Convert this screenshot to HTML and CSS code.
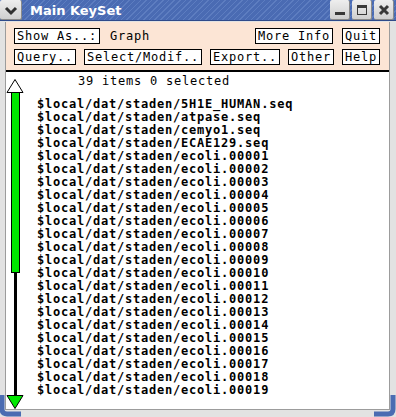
FILE: index.html
```html
<html>
  <head>
    <link rel="stylesheet" href="styles.css">
  </head>
  <body>
    <div class="window">
      <div class="titlebar">
        <div class="tbtn menu">
          <svg width="20" height="18" viewBox="0 0 20 18"><polyline points="5,7 10,12 15,7" fill="none" stroke="#303030" stroke-width="3"/></svg>
        </div>
        <div class="title">Main KeySet</div>
        <div class="tbtn">
          <svg width="18" height="18" viewBox="0 0 18 18"><rect x="4" y="11" width="10" height="3" fill="#383838"/></svg>
        </div>
        <div class="tbtn">
          <svg width="18" height="18" viewBox="0 0 18 18"><rect x="4.5" y="4.5" width="9" height="9" fill="none" stroke="#383838"/><rect x="4" y="4" width="10" height="3" fill="#383838"/></svg>
        </div>
        <div class="tbtn">
          <svg width="18" height="18" viewBox="0 0 18 18"><path d="M5 5 L13 13 M13 5 L5 13" stroke="#383838" stroke-width="3"/></svg>
        </div>
      </div>

      <div class="frame">
        <div class="client">
          <!-- button panel -->
          <div class="panel">
            <div class="row">
              <span class="btn">Show As..:</span>
              <span class="label">Graph</span>
              <span class="btn push">More Info</span>
              <span class="btn">Quit</span>
            </div>
            <div class="row spread">
              <span class="btn">Query..</span>
              <span class="btn">Select/Modif..</span>
              <span class="btn">Export..</span>
              <span class="btn">Other</span>
              <span class="btn">Help</span>
            </div>
          </div>

          <!-- key list -->
          <div class="listarea">
            <div class="scroll">
              <svg width="18" height="14" viewBox="0 0 18 14"><polygon points="9,0.5 17,13.5 1,13.5" fill="#fff" stroke="#000"/></svg>
              <div class="slider"></div>
              <div class="track"></div>
              <svg width="18" height="14" viewBox="0 0 18 14"><polygon points="1,0.5 17,0.5 9,13.5" fill="#00e800" stroke="#000"/></svg>
            </div>
            <div class="list">
              <div class="status">39 items 0 selected</div>
              <div class="items">
                <div>$local/dat/staden/5H1E_HUMAN.seq</div>
                <div>$local/dat/staden/atpase.seq</div>
                <div>$local/dat/staden/cemyo1.seq</div>
                <div>$local/dat/staden/ECAE129.seq</div>
                <div>$local/dat/staden/ecoli.00001</div>
                <div>$local/dat/staden/ecoli.00002</div>
                <div>$local/dat/staden/ecoli.00003</div>
                <div>$local/dat/staden/ecoli.00004</div>
                <div>$local/dat/staden/ecoli.00005</div>
                <div>$local/dat/staden/ecoli.00006</div>
                <div>$local/dat/staden/ecoli.00007</div>
                <div>$local/dat/staden/ecoli.00008</div>
                <div>$local/dat/staden/ecoli.00009</div>
                <div>$local/dat/staden/ecoli.00010</div>
                <div>$local/dat/staden/ecoli.00011</div>
                <div>$local/dat/staden/ecoli.00012</div>
                <div>$local/dat/staden/ecoli.00013</div>
                <div>$local/dat/staden/ecoli.00014</div>
                <div>$local/dat/staden/ecoli.00015</div>
                <div>$local/dat/staden/ecoli.00016</div>
                <div>$local/dat/staden/ecoli.00017</div>
                <div>$local/dat/staden/ecoli.00018</div>
                <div>$local/dat/staden/ecoli.00019</div>
              </div>
            </div>
          </div>
        </div>
      </div>

      <div class="bottom"></div>

      <!-- frame corners -->
      <svg class="corner left" width="22" height="22" viewBox="0 0 22 22"><path d="M2 0 V14 Q2 19 7 19 H21" fill="none" stroke="#4b6cb2" stroke-width="5"/></svg>
      <svg class="corner right" width="22" height="22" viewBox="0 0 22 22"><path d="M19 0 V14 Q19 19 14 19 H0" fill="none" stroke="#4b6cb2" stroke-width="5"/></svg>
    </div>
  </body>
</html>
```

FILE: styles.css
```css
body {
  margin: 0;
  overflow: hidden;
}

.window {
  position: relative;
  width: 396px;
  height: 417px;
  display: flex;
  flex-direction: column;
  background: #e2e2e2;
}

/* TITLE BAR ================================== */
.titlebar {
  height: 20px;
  display: flex;
  align-items: center;
  background: repeating-linear-gradient(135deg, #4a6bb3 0px, #4a6bb3 3px, #5d7dc0 3px, #5d7dc0 4px);
  border-bottom: 1px solid #2e4a8a;
}
.title {
  flex: 1;
  margin-left: 8px;
  color: #fff;
  font-family: "DejaVu Sans", sans-serif;
  font-weight: bold;
  font-size: 13px;
}
.tbtn {
  width: 19px;
  height: 19px;
  margin-right: 2px;
  display: flex;
  align-items: center;
  justify-content: center;
  background: linear-gradient(#eeeeee, #cfcfcf);
  border-right: 1px solid #8a8a8a;
  border-bottom: 1px solid #8a8a8a;
  border-radius: 2px;
}
.tbtn.menu {
  width: 21px;
  margin-right: 0;
}

/* FRAME ====================================== */
.frame {
  flex: 1;
  display: flex;
  padding: 1px 6px 0 5px;
  min-height: 0;
}
.client {
  flex: 1;
  display: flex;
  flex-direction: column;
  border-left: 1px solid #9c9c9c;
  border-right: 1px solid #9c9c9c;
  border-bottom: 1px solid #9c9c9c;
  background: #fff;
  font-family: "DejaVu Sans Mono", monospace;
  font-size: 12px;
  letter-spacing: 0.78px;
  color: #000;
}
.bottom {
  height: 7px;
}
.corner {
  position: absolute;
  bottom: 0;
}
.corner.left { left: 0; }
.corner.right { right: 0; }

/* BUTTON PANEL =============================== */
.panel {
  background: #fce5d5;
  padding: 6px 9px 5px 8px;
  border-bottom: 2px solid #000;
  display: flex;
  flex-direction: column;
  gap: 5px;
}
.row {
  display: flex;
  align-items: center;
}
.row.spread {
  justify-content: space-between;
}
.btn {
  border: 1px solid #000;
  background: #fff;
  padding: 0 2px;
  line-height: 14px;
  height: 14px;
  white-space: nowrap;
}
.label {
  margin-left: 10px;
}
.push {
  margin-left: auto;
  margin-right: 9px;
}

/* LIST ======================================= */
.listarea {
  flex: 1;
  display: flex;
  min-height: 0;
}
.scroll {
  width: 18px;
  display: flex;
  flex-direction: column;
  align-items: center;
  padding-top: 7px;
}
.scroll svg {
  display: block;
}
.slider {
  width: 7px;
  height: 179px;
  background: #00e800;
  border: 1px solid #000;
  border-top: none;
}
.track {
  flex: 1;
  width: 3px;
  background: #000;
}
.list {
  flex: 1;
  padding-left: 13px;
  padding-top: 3px;
}
.status {
  padding-left: 41px;
  line-height: 13px;
}
.items {
  margin-top: 10px;
  font-weight: bold;
  line-height: 13px;
  white-space: nowrap;
}
```
